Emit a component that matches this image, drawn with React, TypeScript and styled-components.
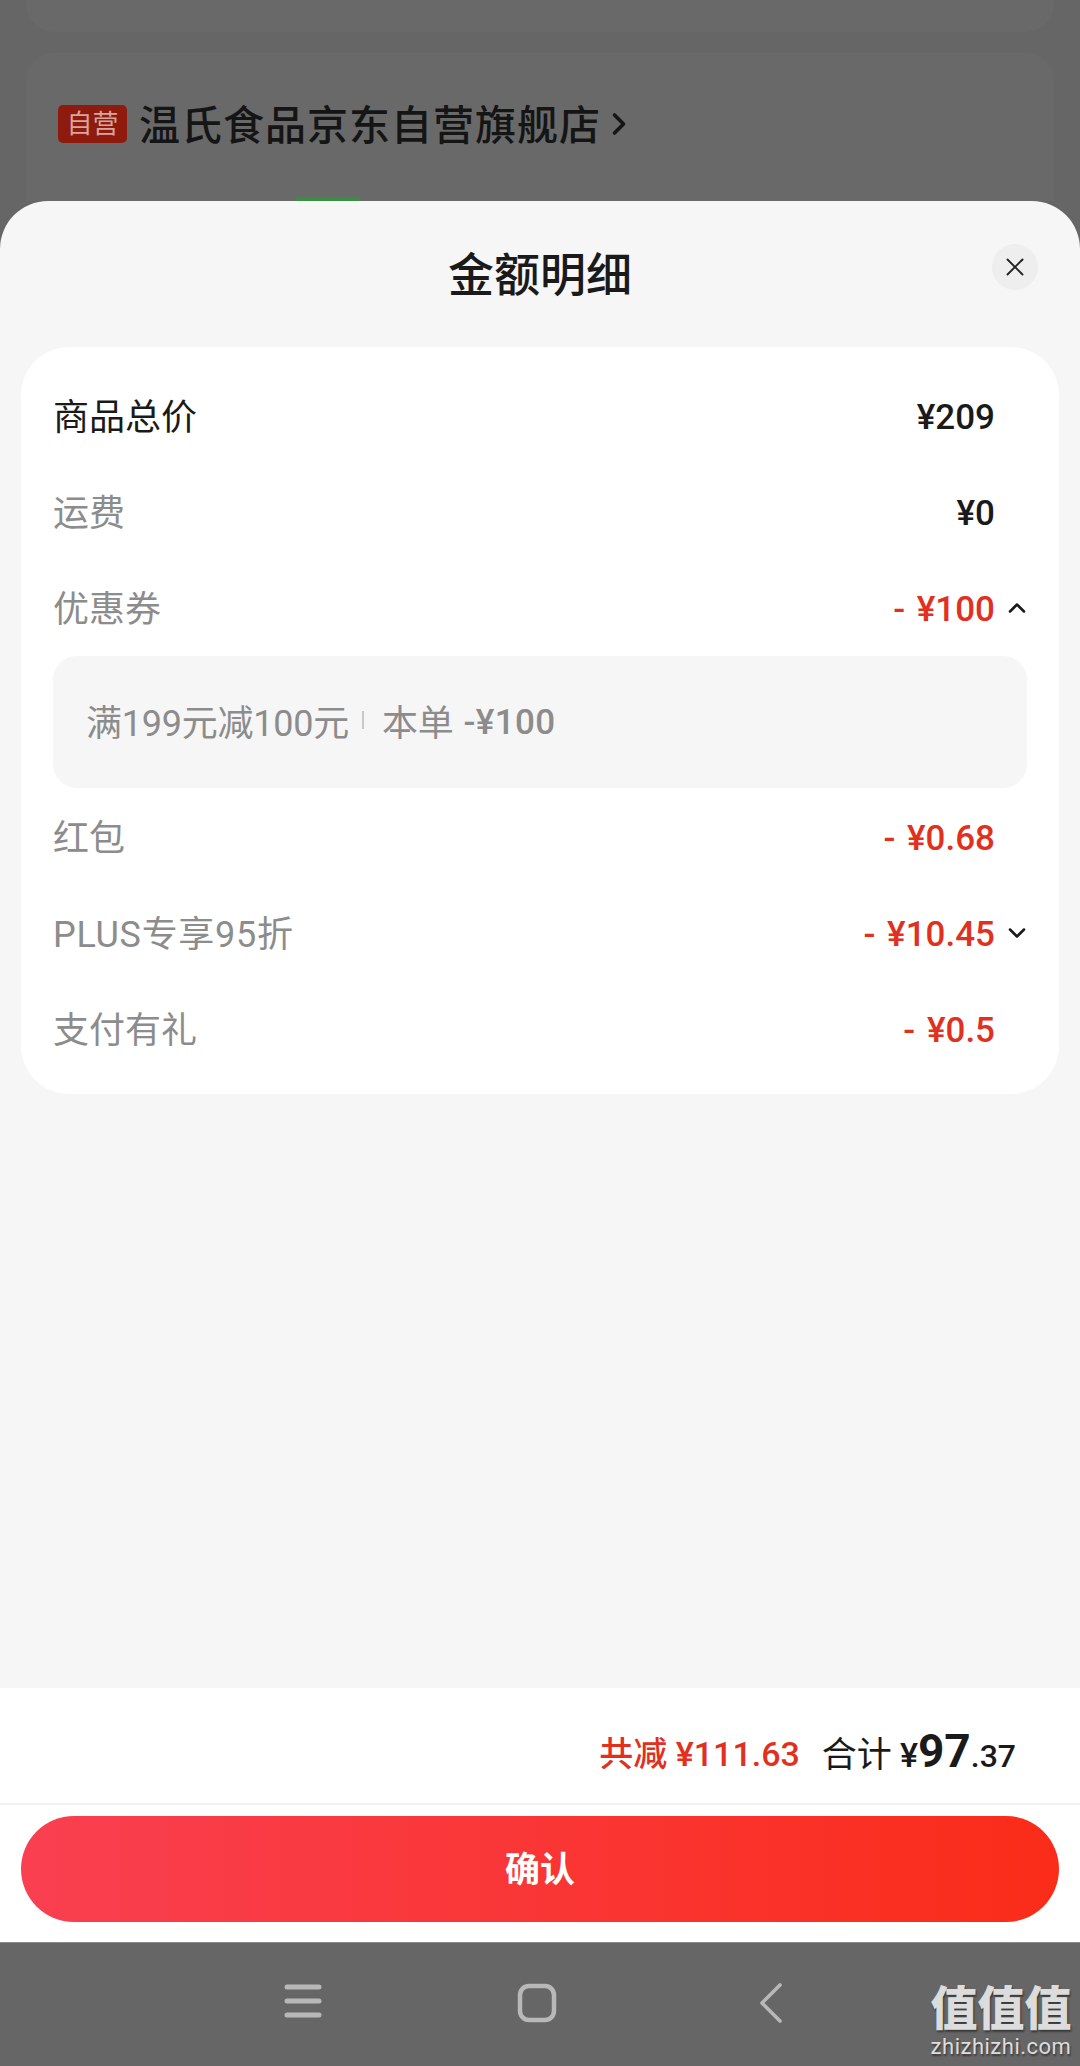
import { ChevronDown, ChevronRight, ChevronUp, X } from 'lucide-react'
import styled, { createGlobalStyle } from 'styled-components'

const GlobalStyle = createGlobalStyle`
  html, body {
    margin: 0;
    padding: 0;
    background: #666;
  }
  * {
    box-sizing: border-box;
  }
  body {
    font-family: Roboto, "Noto Sans CJK SC", sans-serif;
  }
`

const Page = styled.div`
  position: relative;
  width: 1080px;
  height: 2066px;
  display: flex;
  flex-direction: column;
  overflow: hidden;
  background: #666;
`

const Backdrop = styled.div`
  height: 201px;
  flex: none;
  padding: 0 26px;
  overflow: hidden;
`

const BackCardTail = styled.div`
  height: 32px;
  background: #696969;
  border-radius: 0 0 28px 28px;
`

const BackCard = styled.div`
  height: 180px;
  margin-top: 21px;
  padding: 52px 32px 0;
  background: #696969;
  border-radius: 28px 28px 0 0;
`

const StoreRow = styled.div`
  display: flex;
  align-items: center;
  height: 38px;
  color: #151515;
`

const StoreBadge = styled.span`
  width: 69px;
  height: 38px;
  flex: none;
  margin-right: 12px;
  border-radius: 5px;
  background: #8f1a0e;
  color: #d8a49e;
  font-size: 26px;
  line-height: 38px;
  text-align: center;
`

const StoreName = styled.span`
  position: relative;
  top: 2px;
  font-size: 41px;
  letter-spacing: 1px;
  line-height: 48px;
  font-weight: 500;
`

const GreenSliver = styled.div`
  width: 65px;
  height: 4px;
  margin: 55px 0 0 237px;
  background: #3c8f42;
  border-radius: 2px 2px 0 0;
`

const Sheet = styled.section`
  flex: 1;
  min-height: 0;
  display: flex;
  flex-direction: column;
  background: #f6f6f6;
  border-radius: 48px 48px 0 0;
`

const SheetHeader = styled.header`
  position: relative;
  height: 146px;
  flex: none;
  padding-top: 44px;
  text-align: center;
`

const SheetTitle = styled.h1`
  margin: 0;
  font-size: 46px;
  line-height: 60px;
  font-weight: 500;
  color: #1a1a1a;
`

const CloseButton = styled.button`
  position: absolute;
  top: 43px;
  right: 42px;
  width: 46px;
  height: 46px;
  padding: 0;
  display: flex;
  align-items: center;
  justify-content: center;
  border: 0;
  border-radius: 50%;
  background: #eeeeee;
  color: #222;
`

const DetailCard = styled.div`
  margin: 0 21px;
  padding: 21px 32px 0;
  height: 747px;
  flex: none;
  background: #fff;
  border-radius: 48px;
`

const Row = styled.div`
  height: 96px;
  display: flex;
  align-items: center;
  justify-content: space-between;
`

const RowLabel = styled.span<{ $strong?: boolean; $latin?: boolean }>`
  padding-top: 3px;
  font-size: 36px;
  line-height: 48px;
  letter-spacing: ${({ $latin }) => ($latin ? '0.7px' : '0')};
  color: ${({ $strong }) => ($strong ? '#1a1a1a' : '#8c8c8c')};
`

const RowRight = styled.div`
  display: flex;
  align-items: center;
`

const RowValue = styled.span<{ $red?: boolean }>`
  padding-top: 3px;
  font-size: 35px;
  line-height: 48px;
  font-weight: 500;
  word-spacing: 3px;
  color: ${({ $red }) => ($red ? '#e2301f' : '#1a1a1a')};
`

const ChevronSlot = styled.span`
  width: 32px;
  height: 32px;
  display: flex;
  align-items: center;
  justify-content: flex-end;
  color: #1a1a1a;
`

const CouponBox = styled.div`
  height: 132px;
  margin: 0 0 1px;
  padding: 0 0 4px 33px;
  display: flex;
  align-items: center;
  background: #f6f6f6;
  border-radius: 24px;
  color: #8c8c8c;
  font-size: 36px;
  letter-spacing: -0.25px;
`

const CouponDivider = styled.span`
  width: 2px;
  height: 18px;
  margin: 0 18px 0 13px;
  background: #c8c8c8;
`

const CouponAmount = styled.span`
  margin-left: 10px;
  padding-top: 4px;
  font-size: 35px;
  font-weight: 500;
  letter-spacing: 0.4px;
`

const Spacer = styled.div`
  flex: 1;
`

const Footer = styled.footer`
  flex: none;
  height: 254px;
  background: #fff;
`

const SummaryRow = styled.div`
  height: 117px;
  padding: 11px 64px 0 0;
  display: flex;
  align-items: center;
  justify-content: flex-end;
  border-bottom: 2px solid #f2f2f2;
`

const Saved = styled.span`
  margin-right: 22px;
  font-size: 34px;
  font-weight: 500;
  color: #e2301f;
`

const Total = styled.span`
  font-size: 35px;
  color: #1a1a1a;
  display: flex;
  align-items: baseline;
`

const TotalSymbol = styled.span`
  margin-left: 8px;
  font-size: 34px;
  font-weight: 500;
`

const TotalInteger = styled.span`
  font-size: 46px;
  font-weight: 700;
`

const TotalDecimal = styled.span`
  font-size: 32px;
  font-weight: 500;
`

const ConfirmButton = styled.button`
  display: block;
  width: 1038px;
  height: 106px;
  margin: 11px auto 0;
  padding: 0 0 5px;
  border: 0;
  border-radius: 53px;
  background: linear-gradient(90deg, #f93f51 0%, #fa2c19 100%);
  color: #fff;
  font-family: inherit;
  font-size: 35px;
  font-weight: 700;
`

const NavBar = styled.nav`
  height: 124px;
  flex: none;
  position: relative;
  display: grid;
  grid-template-columns: repeat(3, 234px);
  justify-content: start;
  padding: 40px 0 0 186px;
  background: #666;
  border-top: 1px solid #8a8a8a;
`

const NavItem = styled.span`
  display: flex;
  justify-content: center;
  height: 44px;
`

const Watermark = styled.div`
  position: absolute;
  right: 8px;
  bottom: 6px;
  width: 142px;
  text-align: center;
  color: #dcdcdc;
  text-shadow: 1px 2px 2px rgba(0, 0, 0, 0.45);
`

const WatermarkMark = styled.div`
  font-size: 47px;
  line-height: 50px;
  font-weight: 900;
`

const WatermarkSite = styled.div`
  font-size: 22px;
  line-height: 26px;
  letter-spacing: 0.5px;
`

export default function App() {
  return (
    <Page>
      <GlobalStyle />
      <Backdrop>
        <BackCardTail />
        <BackCard>
          <StoreRow>
            <StoreBadge>自营</StoreBadge>
            <StoreName>温氏食品京东自营旗舰店</StoreName>
            <ChevronRight size={36} strokeWidth={2.4} />
          </StoreRow>
          <GreenSliver />
        </BackCard>
      </Backdrop>
      <Sheet>
        <SheetHeader>
          <SheetTitle>金额明细</SheetTitle>
          <CloseButton>
            <X size={30} strokeWidth={1.5} />
          </CloseButton>
        </SheetHeader>
        <DetailCard>
          <Row>
            <RowLabel $strong>商品总价</RowLabel>
            <RowRight>
              <RowValue>¥209</RowValue>
              <ChevronSlot />
            </RowRight>
          </Row>
          <Row>
            <RowLabel>运费</RowLabel>
            <RowRight>
              <RowValue>¥0</RowValue>
              <ChevronSlot />
            </RowRight>
          </Row>
          <Row>
            <RowLabel>优惠券</RowLabel>
            <RowRight>
              <RowValue $red>- ¥100</RowValue>
              <ChevronSlot>
                <ChevronUp size={28} strokeWidth={2.2} style={{ marginRight: -4 }} />
              </ChevronSlot>
            </RowRight>
          </Row>
          <CouponBox>
            满199元减100元
            <CouponDivider />
            本单
            <CouponAmount>-¥100</CouponAmount>
          </CouponBox>
          <Row>
            <RowLabel>红包</RowLabel>
            <RowRight>
              <RowValue $red>- ¥0.68</RowValue>
              <ChevronSlot />
            </RowRight>
          </Row>
          <Row>
            <RowLabel $latin>PLUS专享95折</RowLabel>
            <RowRight>
              <RowValue $red>- ¥10.45</RowValue>
              <ChevronSlot>
                <ChevronDown size={28} strokeWidth={2.2} style={{ marginRight: -4 }} />
              </ChevronSlot>
            </RowRight>
          </Row>
          <Row>
            <RowLabel>支付有礼</RowLabel>
            <RowRight>
              <RowValue $red>- ¥0.5</RowValue>
              <ChevronSlot />
            </RowRight>
          </Row>
        </DetailCard>
        <Spacer />
        <Footer>
          <SummaryRow>
            <Saved>共减 ¥111.63</Saved>
            <Total>
              合计
              <TotalSymbol>¥</TotalSymbol>
              <TotalInteger>97</TotalInteger>
              <TotalDecimal>.37</TotalDecimal>
            </Total>
          </SummaryRow>
          <ConfirmButton>确认</ConfirmButton>
        </Footer>
      </Sheet>
      <NavBar>
        <NavItem>
          <svg width="38" height="36" viewBox="0 0 38 36" fill="none" stroke="#b8b8b8" strokeWidth="5" strokeLinecap="round">
            <path d="M3 4h32M3 18h32M3 32h32" />
          </svg>
        </NavItem>
        <NavItem>
          <svg width="40" height="40" viewBox="0 0 40 40" fill="none" stroke="#b8b8b8" strokeWidth="4.5">
            <rect x="3" y="3" width="34" height="34" rx="9" />
          </svg>
        </NavItem>
        <NavItem>
          <svg width="24" height="40" viewBox="0 0 24 40" fill="none" stroke="#b8b8b8" strokeWidth="3.6" strokeLinecap="round" strokeLinejoin="round">
            <path d="M21 2 3 20l18 18" />
          </svg>
        </NavItem>
        <Watermark>
          <WatermarkMark>值值值</WatermarkMark>
          <WatermarkSite>zhizhizhi.com</WatermarkSite>
        </Watermark>
      </NavBar>
    </Page>
  )
}
